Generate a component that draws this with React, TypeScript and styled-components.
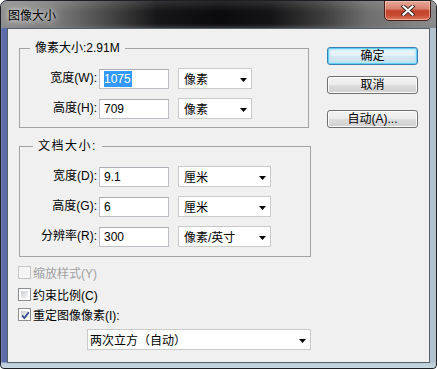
import * as React from 'react'
import styled, { createGlobalStyle, css } from 'styled-components'

const GlobalStyle = createGlobalStyle`
  html, body {
    margin: 0;
    padding: 0;
    background: #ffffff;
  }
  body {
    font-family: "Liberation Sans", "Noto Sans CJK SC", sans-serif;
    font-size: 12px;
    color: #000;
  }
`

const Window = styled.div`
  width: 437px;
  height: 369px;
  box-sizing: border-box;
  border: 1px solid #1c1f24;
  border-radius: 7px 7px 4px 4px;
  overflow: hidden;
  display: flex;
  flex-direction: column;
  background:
    linear-gradient(to top, #c9d9e1 0, #b9ccd8 5px, rgba(185, 204, 216, 0) 6px),
    linear-gradient(to right, #8a97bd 0, #5a6ba7 1px, #5a6ba7 5px, #8fa2c4 40%, #a9bac9 80%, #b4c2cf 100%);
`

const TitleBar = styled.div`
  height: 27px;
  flex-shrink: 0;
  display: flex;
  align-items: flex-start;
  padding-left: 7px;
  background:
    linear-gradient(to bottom, rgba(255, 255, 255, 0.12) 0, rgba(255, 255, 255, 0) 40%, rgba(0, 0, 0, 0) 85%, rgba(120, 130, 140, 0.35) 100%),
    linear-gradient(to right, #8e8e8e 0%, #7c7c7c 12%, #4a4a4a 24%, #161618 36%, #0b0b0d 50%, #141416 62%, #3d3d3d 74%, #6e6e6e 84%, #8c8c8c 100%);
`

const Title = styled.span`
  margin-top: 6px;
  font-size: 12px;
  line-height: 16px;
  font-family: "Noto Sans CJK SC", sans-serif;
  color: #000;
  text-shadow: 0 0 4px #e8e8e8, 0 0 8px #cfcfcf, 0 0 12px #bbbbbb;
`

const CloseButton = styled.div`
  margin-left: auto;
  margin-right: 5px;
  margin-top: -1px;
  width: 47px;
  height: 21px;
  box-sizing: border-box;
  border: 1px solid #4a1d16;
  border-radius: 0 0 5px 5px;
  background: linear-gradient(to bottom, #e6a898 0%, #d8836f 40%, #c2432a 52%, #c84b31 75%, #dc7c62 100%);
  box-shadow: inset 0 0 0 1px rgba(255, 210, 195, 0.55);
  display: flex;
  align-items: center;
  justify-content: center;
`

const Client = styled.div`
  flex: 1;
  margin: 0 6px 5px 6px;
  border: 1px solid #56606b;
  background: #f0f0f0;
  display: flex;
`

const LeftColumn = styled.div`
  padding: 11px 0 0 11px;
  width: 292px;
  display: flex;
  flex-direction: column;
`

const RightColumn = styled.div`
  margin-left: 16px;
  padding-top: 18px;
  display: flex;
  flex-direction: column;
`

const Group = styled.fieldset<{ $width: number; $top?: number; $bottom?: number }>`
  margin: ${p => p.$top ?? 0}px 0 0 0;
  width: ${p => p.$width}px;
  min-width: 0;
  box-sizing: border-box;
  border: 1px solid #a3a3a3;
  padding: 12px 0 ${p => p.$bottom ?? 8}px 0;
  display: flex;
  flex-direction: column;
  gap: 9px;
`

const Legend = styled.legend<{ $indent: number; $spacing?: number }>`
  margin-left: ${p => p.$indent}px;
  padding: 0 5px;
  line-height: 16px;
  font-size: 12px;
  letter-spacing: ${p => p.$spacing ?? 0}px;
  font-family: "Liberation Sans", "Noto Sans CJK SC", sans-serif;
`

const Row = styled.div`
  display: flex;
  align-items: flex-start;
  height: 21px;
`

const Label = styled.span`
  width: 77px;
  margin-right: 2px;
  text-align: right;
  line-height: 21px;
  white-space: nowrap;
`

const TextBox = styled.div`
  margin-top: 1px;
  width: 70px;
  height: 20px;
  box-sizing: border-box;
  border: 1px solid #bdbfc5;
  border-top-color: #abadb3;
  background: #fff;
  padding-left: 4px;
  display: flex;
  align-items: center;
  line-height: 16px;
`

const Selected = styled.span`
  background: #3399ff;
  color: #fff;
  padding: 0 1px 0 0;
`

const Select = styled.div<{ $width: number; $left?: number; $pad?: number }>`
  margin-left: ${p => p.$left ?? 9}px;
  width: ${p => p.$width}px;
  height: 21px;
  box-sizing: border-box;
  border: 1px solid #cacaca;
  background: #fff;
  padding-left: ${p => p.$pad ?? 5}px;
  padding-right: 4px;
  display: flex;
  align-items: center;
  white-space: nowrap;
  flex-shrink: 0;
`

const ArrowIcon = styled.svg`
  margin-left: auto;
  margin-top: 2px;
  flex-shrink: 0;
`

const Button = styled.div<{ $top: number; $isDefault?: boolean }>`
  margin-top: ${p => p.$top}px;
  width: 91px;
  height: 18px;
  box-sizing: border-box;
  border: 1px solid #707070;
  border-radius: 3px;
  background: linear-gradient(to bottom, #f3f3f3 0%, #ebebeb 48%, #dddddd 52%, #cfcfcf 100%);
  box-shadow: inset 0 0 0 1px #fbfbfb;
  display: flex;
  align-items: center;
  justify-content: center;
  line-height: 16px;
  ${p => p.$isDefault && css`
    border-color: #3c7fb1;
    background: linear-gradient(to bottom, #eef7fb 0%, #e3f1f8 48%, #d4e8f2 52%, #c6dfec 100%);
    box-shadow: inset 0 0 0 1px #62cdf5, inset 0 0 2px 2px #b4e5f8;
  `}
`

const CheckRow = styled.div<{ $top: number; $disabled?: boolean }>`
  margin-top: ${p => p.$top}px;
  margin-left: -1px;
  display: flex;
  align-items: center;
  height: 13px;
  color: ${p => (p.$disabled ? '#a0a0a0' : '#000')};
  white-space: nowrap;
`

const Box = styled.span<{ $disabled?: boolean }>`
  width: 13px;
  height: 13px;
  box-sizing: border-box;
  border: 1px solid ${p => (p.$disabled ? '#c4c4c4' : '#8e8f8f')};
  background: ${p => (p.$disabled ? '#f4f4f4' : '#fff')};
  padding: 2px;
  margin-right: 2px;
  flex-shrink: 0;
  display: flex;
  position: relative;
  > span {
    flex: 1;
    background: ${p => (p.$disabled ? '#f4f4f4' : 'linear-gradient(135deg, #c9ccd1 0%, #e2e4e7 50%, #f3f3f3 100%)')};
  }
`

const Check = styled.svg`
  position: absolute;
  left: 1px;
  top: 1px;
`

function Arrow() {
  return (
    <ArrowIcon width='7' height='4' viewBox='0 0 7 4'>
      <polygon points='0,0 7,0 3.5,4' fill='#000' />
    </ArrowIcon>
  )
}

function CheckBox({ checked, disabled, top, children }: { checked?: boolean; disabled?: boolean; top: number; children: React.ReactNode }) {
  return (
    <CheckRow $top={top} $disabled={disabled}>
      <Box $disabled={disabled}>
        <span />
        {checked && (
          <Check width='11' height='11' viewBox='0 0 11 11'>
            <path d='M2.2 5.4 L4.4 8 L8.8 2.2' fill='none' stroke='#3a4f8c' strokeWidth='1.8' />
          </Check>
        )}
      </Box>
      <span>{children}</span>
    </CheckRow>
  )
}

function Field({ label, value, unit, unitWidth, selected }: { label: string; value: string; unit: string; unitWidth: number; selected?: boolean }) {
  return (
    <Row>
      <Label>{label}</Label>
      <TextBox>{selected ? <Selected>{value}</Selected> : value}</TextBox>
      <Select $width={unitWidth}>
        {unit}
        <Arrow />
      </Select>
    </Row>
  )
}

export default function App() {
  return (
    <>
      <GlobalStyle />
      <Window>
        <TitleBar>
          <Title>图像大小</Title>
          <CloseButton>
            <svg width='14' height='11' viewBox='0 0 14 11'>
              <path d='M2.5 1.5 L11.5 9.5 M11.5 1.5 L2.5 9.5' stroke='#3a2622' strokeWidth='4' strokeLinecap='square' />
              <path d='M2.5 1.5 L11.5 9.5 M11.5 1.5 L2.5 9.5' stroke='#ffffff' strokeWidth='2.2' strokeLinecap='square' />
            </svg>
          </CloseButton>
        </TitleBar>
        <Client>
          <LeftColumn>
            <Group $width={290}>
              <Legend $indent={10}>像素大小:2.91M</Legend>
              <Field label='宽度(W):' value='1075' unit='像素' unitWidth={74} selected />
              <Field label='高度(H):' value='709' unit='像素' unitWidth={74} />
            </Group>
            <Group $width={292} $top={10} $bottom={9}>
              <Legend $indent={13} $spacing={1.5}>文档大小:</Legend>
              <Field label='宽度(D):' value='9.1' unit='厘米' unitWidth={93} />
              <Field label='高度(G):' value='6' unit='厘米' unitWidth={93} />
              <Field label='分辨率(R):' value='300' unit='像素/英寸' unitWidth={93} />
            </Group>
            <CheckBox top={9} disabled>缩放样式(Y)</CheckBox>
            <CheckBox top={9}>约束比例(C)</CheckBox>
            <CheckBox top={7} checked>重定图像像素(I):</CheckBox>
            <Row style={{ marginTop: 8 }}>
              <Select $width={224} $left={68} $pad={2}>
                两次立方（自动）
                <Arrow />
              </Select>
            </Row>
          </LeftColumn>
          <RightColumn>
            <Button $top={0} $isDefault>确定</Button>
            <Button $top={11}>取消</Button>
            <Button $top={16}>自动(A)...</Button>
          </RightColumn>
        </Client>
      </Window>
    </>
  )
}
